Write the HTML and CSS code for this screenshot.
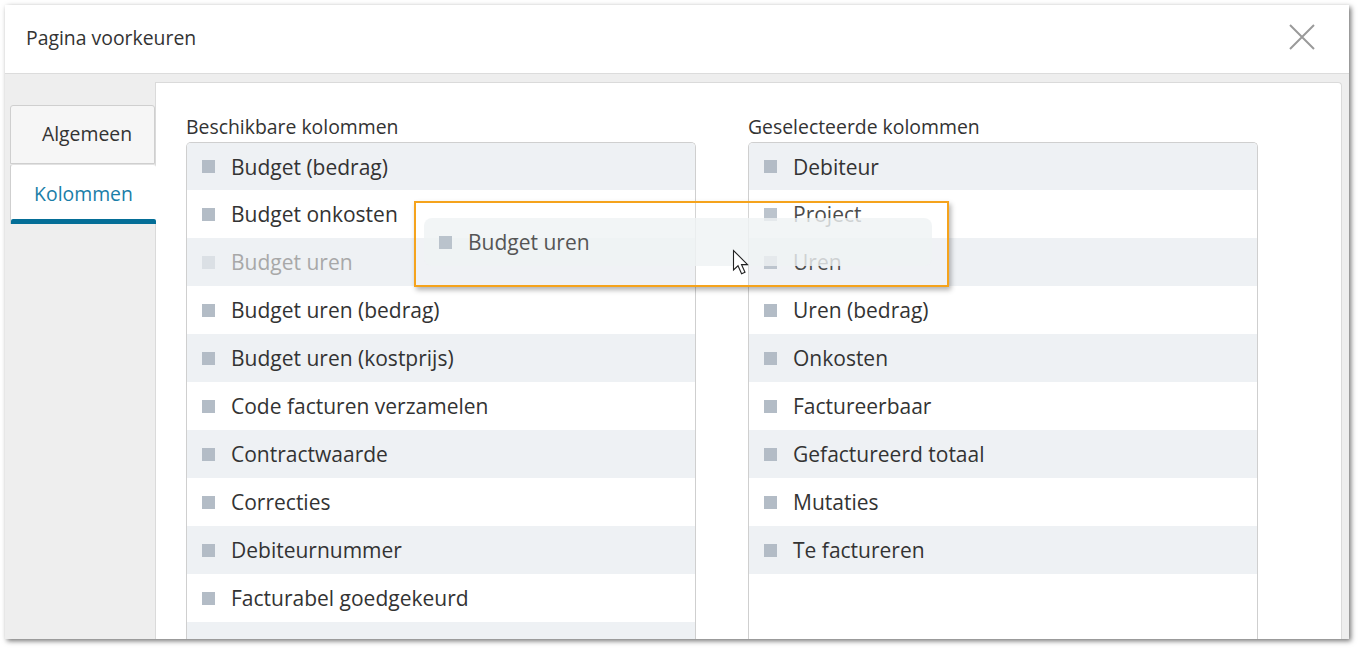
FILE: index.html
```html
<!DOCTYPE html>
<html lang="nl">
<head>
<meta charset="utf-8">
<title>Pagina voorkeuren</title>
<link rel="stylesheet" href="styles.css">
</head>
<body>
<div class="dialog">
  <div class="header">
    <div class="title">Pagina voorkeuren</div>
    <button class="close" aria-label="Sluiten">
      <svg width="28" height="28" viewBox="0 0 28 28"><path d="M2 2 L26 26 M26 2 L2 26" stroke="#9a9a9a" stroke-width="2" fill="none"/></svg>
    </button>
  </div>
  <div class="body">
    <div class="tabs">
      <div class="tab">Algemeen</div>
      <div class="tab active">Kolommen</div>
    </div>
    <div class="panel">
      <div class="column">
        <div class="label">Beschikbare kolommen</div>
        <div class="list">
          <div class="row"><span class="sq"></span>Budget (bedrag)</div>
          <div class="row"><span class="sq"></span>Budget onkosten</div>
          <div class="row placeholder"><span class="sq"></span>Budget uren</div>
          <div class="row"><span class="sq"></span>Budget uren (bedrag)</div>
          <div class="row"><span class="sq"></span>Budget uren (kostprijs)</div>
          <div class="row"><span class="sq"></span>Code facturen verzamelen</div>
          <div class="row"><span class="sq"></span>Contractwaarde</div>
          <div class="row"><span class="sq"></span>Correcties</div>
          <div class="row"><span class="sq"></span>Debiteurnummer</div>
          <div class="row"><span class="sq"></span>Facturabel goedgekeurd</div>
          <div class="row last"><span class="sq"></span>Facturabel ongefactureerd</div>
        </div>
      </div>
      <div class="column">
        <div class="label">Geselecteerde kolommen</div>
        <div class="list">
          <div class="row"><span class="sq"></span>Debiteur</div>
          <div class="row"><span class="sq"></span>Project</div>
          <div class="row"><span class="sq"></span>Uren</div>
          <div class="row"><span class="sq"></span>Uren (bedrag)</div>
          <div class="row"><span class="sq"></span>Onkosten</div>
          <div class="row"><span class="sq"></span>Factureerbaar</div>
          <div class="row"><span class="sq"></span>Gefactureerd totaal</div>
          <div class="row"><span class="sq"></span>Mutaties</div>
          <div class="row"><span class="sq"></span>Te factureren</div>
        </div>
      </div>
    </div>
  </div>
</div>
<div class="drag">
  <div class="ghost"><span class="sq"></span>Budget uren</div>
</div>
<svg class="cursor" width="22" height="28" viewBox="0 0 22 28"><path d="M1.5 1.5 L1.5 21 L6 16.8 L9.6 24.8 L13 23.3 L9.5 15.6 L15.6 15.6 Z" fill="#fff" stroke="#222" stroke-width="1.1" stroke-linejoin="miter"/></svg>
</body>
</html>
```
FILE: styles.css
```css
html, body {
  margin: 0;
  padding: 0;
  background: #fff;
}
body {
  font-family: "Open Sans", "Liberation Sans", sans-serif;
  color: #333;
  position: relative;
  width: 1358px;
  height: 648px;
  overflow: hidden;
}
.dialog {
  position: relative;
  margin: 5px 0 0 5px;
  width: 1344px;
  height: 634px;
  background: #eee;
  box-shadow: 2px 2px 5px rgba(0,0,0,0.55);
  overflow: hidden;
  display: flex;
  flex-direction: column;
}
.header {
  height: 68px;
  flex: none;
  background: #fff;
  border-bottom: 1px solid #dcdcdc;
  display: flex;
  align-items: center;
  justify-content: space-between;
  padding: 0 33px 0 21px;
}
.title {
  font-size: 19.4px;
  color: #333;
  margin-top: -4px;
}
.close {
  border: 0;
  background: none;
  padding: 0;
  width: 28px;
  height: 28px;
  margin-top: -4px;
  display: block;
}
.close svg { display: block; }
.body {
  flex: 1;
  display: flex;
  min-height: 0;
}
.tabs {
  width: 145px;
  flex: none;
  padding: 31px 0 0 5px;
  position: relative;
  z-index: 1;
}
.tab {
  height: 59px;
  box-sizing: border-box;
  border: 1px solid #cfcfcf;
  border-radius: 3px 3px 0 0;
  background: #f6f6f6;
  font-size: 19.4px;
  display: flex;
  align-items: center;
  justify-content: center;
  padding-left: 9px;
  padding-bottom: 2px;
  color: #333;
}
.tab.active {
  height: 60px;
  background: #fff;
  color: #1a7ea8;
  border-right: 0;
  border-bottom: 0;
  border-top: 1px solid #e2e2e2;
  padding-left: 0;
  padding-right: 0;
  padding-bottom: 2px;
  position: relative;
  margin-right: -1px;
}
.tab.active::after {
  content: "";
  position: absolute;
  left: 0;
  right: 0;
  bottom: 0;
  height: 5px;
  background: #046e97;
  border-radius: 2px 2px 0 0;
}
.panel {
  flex: 1;
  margin: 8px 7px 0 0;
  background: #fff;
  border: 1px solid #dadada;
  border-bottom: 0;
  border-radius: 0 4px 0 0;
  padding: 35px 0 0 30px;
  display: flex;
  gap: 52px;
  min-height: 0;
}
.column {
  width: 510px;
  display: flex;
  flex-direction: column;
}
.label {
  font-size: 19.4px;
  line-height: 24px;
  height: 24px;
  color: #333;
  margin-top: -3px;
  margin-bottom: 3px;
}
.list {
  flex: 1;
  border: 1px solid #cfcfcf;
  border-bottom: 0;
  border-radius: 5px 5px 0 0;
  overflow: hidden;
}
.row {
  height: 48px;
  display: flex;
  align-items: center;
  padding-left: 15px;
  font-size: 21px;
  color: #333;
  white-space: nowrap;
}
.row:nth-child(odd) {
  background: #eef1f4;
}
.row:first-child {
  height: 47px;
}
.row.last {
  padding-top: 4px;
}
.sq {
  width: 13px;
  height: 13px;
  background: #b3bcc6;
  margin-right: 16px;
  flex: none;
}
.row.placeholder {
  color: #a8a8a8;
}
.row.placeholder .sq {
  background: #dbe0e5;
}
.drag {
  position: absolute;
  left: 414px;
  top: 201px;
  width: 535px;
  height: 86px;
  box-sizing: border-box;
  border: 2px solid #f5a31c;
  background: rgba(255,255,255,0.12);
  box-shadow: 2px 3px 5px rgba(0,0,0,0.3);
  padding: 15px 15px 0 8px;
}
.ghost {
  height: 48px;
  border-radius: 8px;
  background: rgba(239,242,244,0.8);
  display: flex;
  align-items: center;
  padding-left: 15px;
  font-size: 21px;
  color: #555;
}
.ghost .sq {
  background: #bac3cc;
}
.cursor {
  position: absolute;
  left: 732px;
  top: 249px;
}
```
